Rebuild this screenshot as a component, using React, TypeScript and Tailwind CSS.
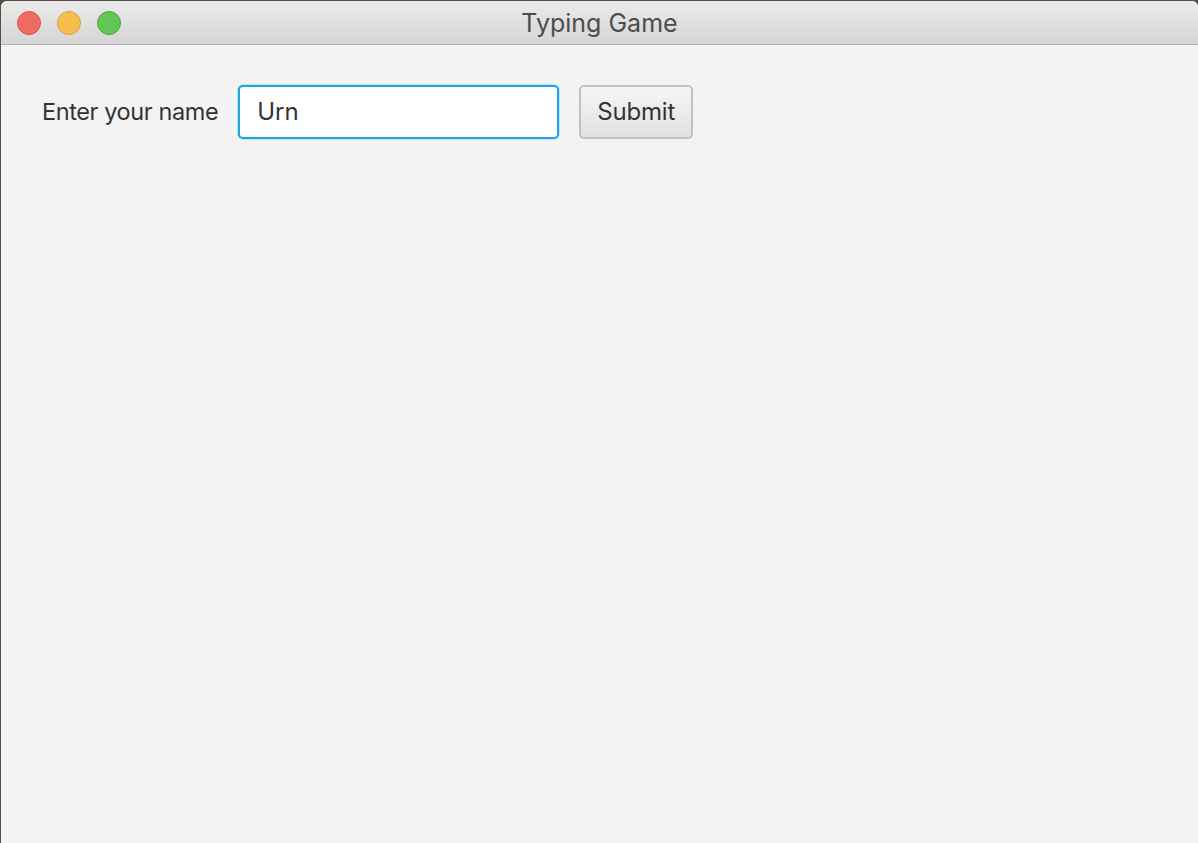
export default function App() {
  return (
    <div className="h-[843px] w-[1198px] bg-[#5b4c40] pt-px pl-px overflow-hidden" style={{ fontFamily: "Inter, 'Liberation Sans', sans-serif" }}>
      <div className="flex h-full flex-col rounded-t-[6px] overflow-hidden bg-[#f3f3f3]">
        <div className="relative flex h-[44px] shrink-0 items-center justify-center border-b border-[#b2b2b2] bg-gradient-to-b from-[#ebebeb] to-[#d5d5d5]">
          <div className="absolute left-[16px] top-[10px] flex gap-[16px]">
            <span className="block h-[24px] w-[24px] rounded-full border border-[#d9534c] bg-[#ee6b60]" />
            <span className="block h-[24px] w-[24px] rounded-full border border-[#dba33a] bg-[#f6be4f]" />
            <span className="block h-[24px] w-[24px] rounded-full border border-[#4ea73a] bg-[#62c655]" />
          </div>
          <span className="pt-[2px] text-[25px] text-[#4d4d4d]">Typing Game</span>
        </div>
        <div className="flex items-center gap-[20px] px-[41px] pt-[40px]">
          <label className="text-[23.5px] text-[#333333] tracking-[-0.4px]">Enter your name</label>
          <div className="flex h-[54px] w-[321px] items-center rounded-[5px] border-2 border-[#1ca6d9] bg-white px-[17px] shadow-[0_0_0_1px_#bfe4f2]">
            <span className="text-[24px] text-[#333333]">Urn</span>
          </div>
          <button className="h-[54px] w-[114px] rounded-[5px] border-2 border-[#c2c2c2] bg-gradient-to-b from-[#f5f5f5] to-[#e2e2e2] text-[24px] text-[#333333] tracking-[-0.2px]">
            Submit
          </button>
        </div>
      </div>
    </div>
  );
}
